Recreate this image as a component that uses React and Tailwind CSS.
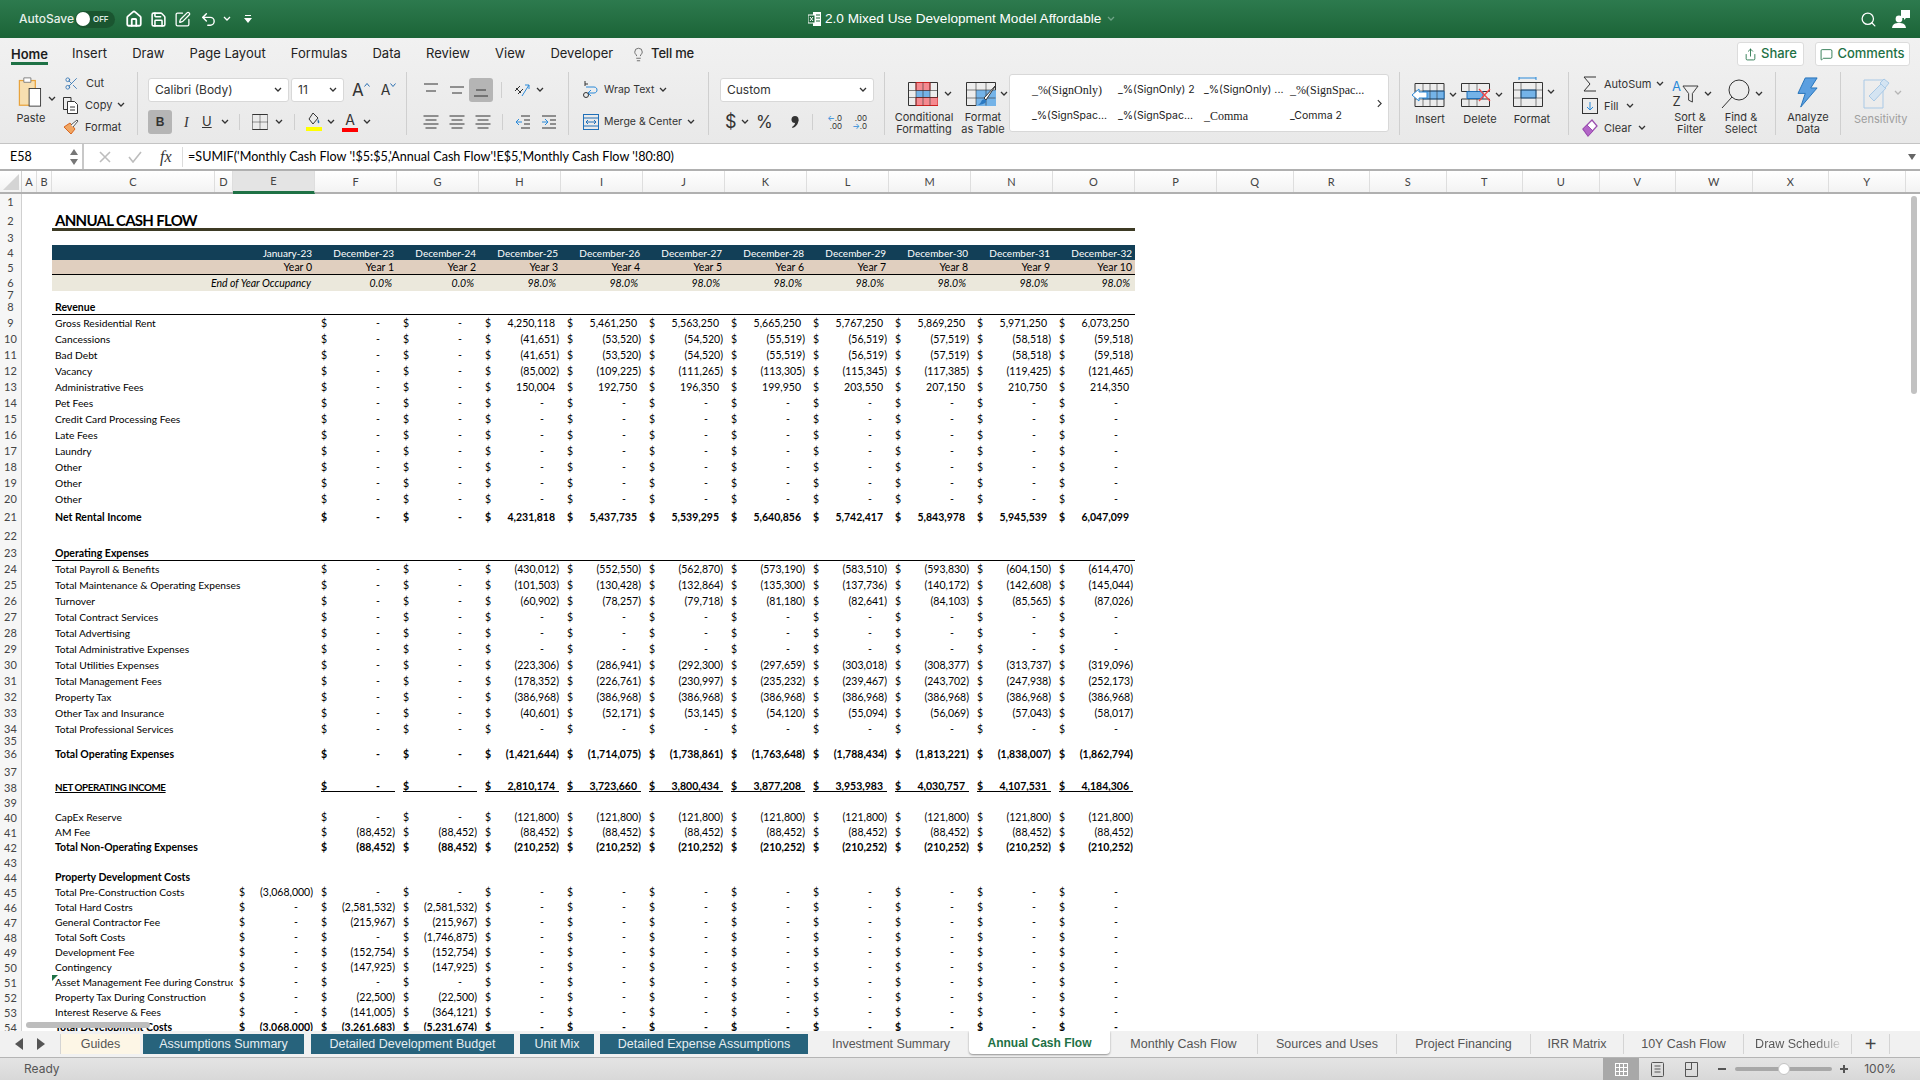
import { Home, Save, SquarePen, Undo2, Search, Share, MessageSquare, Lightbulb, Scissors } from 'lucide-react';

const DASHES = (n) => Array(n).fill('-');
const dollar8 = (v) => Array(8).fill(v);

const rows = [
  { n: 1, h: 'h-[16px]' },
  { n: 2, h: 'h-[21px]', type: 'title', label: 'ANNUAL CASH FLOW' },
  { n: 3, h: 'h-[14px]' },
  { n: 4, h: 'h-[15px]', type: 'dates' },
  { n: 5, h: 'h-[15px]', type: 'years' },
  { n: 6, h: 'h-[16px]', type: 'occupancy' },
  { n: 7, h: 'h-[8px]' },
  { n: 8, h: 'h-[16px]', type: 'section', label: 'Revenue' },
  { n: 9, label: 'Gross Residential Rent', vals: ['-', '-', '4,250,118', '5,461,250', '5,563,250', '5,665,250', '5,767,250', '5,869,250', '5,971,250', '6,073,250'] },
  { n: 10, label: 'Cancessions', vals: ['-', '-', '(41,651)', '(53,520)', '(54,520)', '(55,519)', '(56,519)', '(57,519)', '(58,518)', '(59,518)'] },
  { n: 11, label: 'Bad Debt', vals: ['-', '-', '(41,651)', '(53,520)', '(54,520)', '(55,519)', '(56,519)', '(57,519)', '(58,518)', '(59,518)'] },
  { n: 12, label: 'Vacancy', vals: ['-', '-', '(85,002)', '(109,225)', '(111,265)', '(113,305)', '(115,345)', '(117,385)', '(119,425)', '(121,465)'] },
  { n: 13, label: 'Administrative Fees', vals: ['-', '-', '150,004', '192,750', '196,350', '199,950', '203,550', '207,150', '210,750', '214,350'] },
  { n: 14, label: 'Pet Fees', vals: DASHES(10) },
  { n: 15, label: 'Credit Card Processing Fees', vals: DASHES(10) },
  { n: 16, label: 'Late Fees', vals: DASHES(10) },
  { n: 17, label: 'Laundry', vals: DASHES(10) },
  { n: 18, label: 'Other', vals: DASHES(10) },
  { n: 19, label: 'Other', vals: DASHES(10) },
  { n: 20, label: 'Other', vals: DASHES(10) },
  { n: 21, h: 'h-[20px]', bold: true, label: 'Net Rental Income', vals: ['-', '-', '4,231,818', '5,437,735', '5,539,295', '5,640,856', '5,742,417', '5,843,978', '5,945,539', '6,047,099'] },
  { n: 22, h: 'h-[18px]' },
  { n: 23, h: 'h-[16px]', type: 'section', label: 'Operating Expenses' },
  { n: 24, label: 'Total Payroll & Benefits', vals: ['-', '-', '(430,012)', '(552,550)', '(562,870)', '(573,190)', '(583,510)', '(593,830)', '(604,150)', '(614,470)'] },
  { n: 25, label: 'Total Maintenance & Operating Expenses', vals: ['-', '-', '(101,503)', '(130,428)', '(132,864)', '(135,300)', '(137,736)', '(140,172)', '(142,608)', '(145,044)'] },
  { n: 26, label: 'Turnover', vals: ['-', '-', '(60,902)', '(78,257)', '(79,718)', '(81,180)', '(82,641)', '(84,103)', '(85,565)', '(87,026)'] },
  { n: 27, label: 'Total Contract Services', vals: DASHES(10) },
  { n: 28, label: 'Total Advertising', vals: DASHES(10) },
  { n: 29, label: 'Total Administrative Expenses', vals: DASHES(10) },
  { n: 30, label: 'Total Utilities Expenses', vals: ['-', '-', '(223,306)', '(286,941)', '(292,300)', '(297,659)', '(303,018)', '(308,377)', '(313,737)', '(319,096)'] },
  { n: 31, label: 'Total Management Fees', vals: ['-', '-', '(178,352)', '(226,761)', '(230,997)', '(235,232)', '(239,467)', '(243,702)', '(247,938)', '(252,173)'] },
  { n: 32, label: 'Property Tax', vals: ['-', '-', ...dollar8('(386,968)')] },
  { n: 33, label: 'Other Tax and Insurance', vals: ['-', '-', '(40,601)', '(52,171)', '(53,145)', '(54,120)', '(55,094)', '(56,069)', '(57,043)', '(58,017)'] },
  { n: 34, label: 'Total Professional Services', vals: DASHES(10) },
  { n: 35, h: 'h-[8px]' },
  { n: 36, h: 'h-[18px]', bold: true, label: 'Total Operating Expenses', vals: ['-', '-', '(1,421,644)', '(1,714,075)', '(1,738,861)', '(1,763,648)', '(1,788,434)', '(1,813,221)', '(1,838,007)', '(1,862,794)'] },
  { n: 37, h: 'h-[17px]' },
  { n: 38, h: 'h-[15px]', bold: true, under: true, label: 'NET OPERATING INCOME', vals: ['-', '-', '2,810,174', '3,723,660', '3,800,434', '3,877,208', '3,953,983', '4,030,757', '4,107,531', '4,184,306'] },
  { n: 39, h: 'h-[15px]' },
  { n: 40, h: 'h-[15px]', label: 'CapEx Reserve', vals: ['-', '-', ...dollar8('(121,800)')] },
  { n: 41, h: 'h-[15px]', label: 'AM Fee', vals: Array(10).fill('(88,452)') },
  { n: 42, h: 'h-[15px]', bold: true, label: 'Total Non-Operating Expenses', vals: ['(88,452)', '(88,452)', ...dollar8('(210,252)')] },
  { n: 43, h: 'h-[15px]' },
  { n: 44, h: 'h-[15px]', bold: true, label: 'Property Development  Costs' },
  { n: 45, h: 'h-[15px]', label: 'Total Pre-Construction Costs', first: '(3,068,000)', vals: DASHES(10) },
  { n: 46, h: 'h-[15px]', label: 'Total Hard Costrs', first: '-', vals: ['(2,581,532)', '(2,581,532)', ...DASHES(8)] },
  { n: 47, h: 'h-[15px]', label: 'General Contractor Fee', first: '-', vals: ['(215,967)', '(215,967)', ...DASHES(8)] },
  { n: 48, h: 'h-[15px]', label: 'Total Soft Costs', first: '-', vals: ['-', '(1,746,875)', ...DASHES(8)] },
  { n: 49, h: 'h-[15px]', label: 'Development Fee', first: '-', vals: ['(152,754)', '(152,754)', ...DASHES(8)] },
  { n: 50, h: 'h-[15px]', label: 'Contingency', first: '-', vals: ['(147,925)', '(147,925)', ...DASHES(8)] },
  { n: 51, h: 'h-[15px]', label: 'Asset Management Fee during Construction', first: '-', vals: DASHES(10), flag: true },
  { n: 52, h: 'h-[15px]', label: 'Property Tax During Construction', first: '-', vals: ['(22,500)', '(22,500)', ...DASHES(8)] },
  { n: 53, h: 'h-[15px]', label: 'Interest Reserve & Fees', first: '-', vals: ['(141,005)', '(364,121)', ...DASHES(8)] },
  { n: 54, h: 'h-[15px]', bold: true, label: 'Total Development Costs', first: '(3,068,000)', vals: ['(3,261,683)', '(5,231,674)', ...DASHES(8)] },
];

const dates = ['January-23', 'December-23', 'December-24', 'December-25', 'December-26', 'December-27', 'December-28', 'December-29', 'December-30', 'December-31', 'December-32'];
const years = ['Year 0', 'Year 1', 'Year 2', 'Year 3', 'Year 4', 'Year 5', 'Year 6', 'Year 7', 'Year 8', 'Year 9', 'Year 10'];
const occ = ['0.0%', '0.0%', '98.0%', '98.0%', '98.0%', '98.0%', '98.0%', '98.0%', '98.0%', '98.0%'];

const columns = [
  ['A', 'w-[15px]'], ['B', 'w-[15px]'], ['C', 'w-[163px]'], ['D', 'w-[18px]'], ['E', 'w-[82px]'], ['F', 'w-[82px]'], ['G', 'w-[82px]'], ['H', 'w-[82px]'],
  ['I', 'w-[82px]'], ['J', 'w-[82px]'], ['K', 'w-[82px]'], ['L', 'w-[82px]'], ['M', 'w-[82px]'], ['N', 'w-[82px]'], ['O', 'w-[82px]'], ['P', 'w-[82px]'],
  ['Q', 'w-[76.5px]'], ['R', 'w-[76.5px]'], ['S', 'w-[76.5px]'], ['T', 'w-[76.5px]'], ['U', 'w-[76.5px]'], ['V', 'w-[76.5px]'], ['W', 'w-[76.5px]'], ['X', 'w-[76.5px]'], ['Y', 'w-[76.5px]'],
];

const menu = ['Insert', 'Draw', 'Page Layout', 'Formulas', 'Data', 'Review', 'View', 'Developer'];

const tabs = [
  { label: 'Guides', w: 'w-[79px]', cls: 'bg-[#fdf6e6] text-[#555] h-[20px]' },
  { label: 'Assumptions Summary', w: 'w-[161px] ml-[3px]', cls: 'bg-[#27637c] text-[#e6eef2] h-[20px]' },
  { label: 'Detailed Development Budget', w: 'w-[203px] ml-[7px]', cls: 'bg-[#27637c] text-[#e6eef2] h-[20px]' },
  { label: 'Unit Mix', w: 'w-[74px] ml-[6px]', cls: 'bg-[#27637c] text-[#e6eef2] h-[20px]' },
  { label: 'Detailed Expense Assumptions', w: 'w-[208px] ml-[6px]', cls: 'bg-[#27637c] text-[#e6eef2] h-[20px]' },
  { label: 'Investment Summary', w: 'w-[161px]', cls: 'text-[#555] h-[20px] pl-[5px]' },
  { label: 'Annual Cash Flow', w: 'w-[141px]', cls: 'bg-white text-[#1e7145] font-bold text-[12px] h-[23px] -mt-[3px] rounded-b shadow-[0_1px_2px_rgba(0,0,0,0.4)]' },
  { label: 'Monthly Cash Flow', w: 'w-[148px]', cls: 'text-[#555] h-[20px] border-r border-[#d4d4d4]' },
  { label: 'Sources and Uses', w: 'w-[139px]', cls: 'text-[#555] h-[20px] border-r border-[#d4d4d4]' },
  { label: 'Project Financing', w: 'w-[134px]', cls: 'text-[#555] h-[20px] border-r border-[#d4d4d4]' },
  { label: 'IRR Matrix', w: 'w-[93px]', cls: 'text-[#555] h-[20px] border-r border-[#d4d4d4]' },
  { label: '10Y Cash Flow', w: 'w-[120px]', cls: 'text-[#555] h-[20px] border-r border-[#d4d4d4]' },
  { label: 'Draw Schedule', w: 'w-[108px]', cls: 'text-[#555] h-[20px] border-r border-[#d4d4d4]' },
];

function Chev({ className = '', color = '#333' }) {
  return (
    <svg viewBox="0 0 8 6" className={`w-[8px] h-[6px] shrink-0 ${className}`} fill="none" stroke={color} strokeWidth="1.3">
      <path d="M1 1l3 3 3-3" />
    </svg>
  );
}

function Lines({ rows: ys, widths = [15, 15, 15] }) {
  return (
    <svg viewBox="0 0 16 16" className="w-[16px] h-[16px]" stroke="#333" strokeWidth="1" fill="none">
      {ys.map((y, i) => (
        <path key={y} d={`M${(16 - widths[i]) / 2} ${y}h${widths[i]}`} />
      ))}
    </svg>
  );
}

function CellGrid({ children, w = 'w-[30px]', h = 'h-[24px]', view = '0 0 30 24' }) {
  return (
    <svg viewBox={view} className={`${w} ${h}`} fill="none">
      {children}
    </svg>
  );
}

function RibbonLabel({ children, className = 'text-[#333]' }) {
  return <div className={`text-[11px] leading-[12px] text-center ${className}`}>{children}</div>;
}

function TitleBar() {
  return (
    <div className="h-[38px] shrink-0 flex items-center bg-gradient-to-b from-[#2d7a4e] to-[#1b6437] text-white font-['Inter',sans-serif]">
      <div className="w-[440px] flex items-center pl-[19px]">
        <span className="text-[12px] font-medium text-[#e7f0ea] w-[56px]">AutoSave</span>
        <div className="w-[40px] h-[17px] rounded-full bg-[#1a5530] flex items-center pl-[1px] gap-[3px]">
          <div className="w-[14px] h-[14px] rounded-full bg-white" />
          <span className="text-[8px] font-semibold text-[#dfe9e2]">OFF</span>
        </div>
        <Home className="ml-[10px] w-[18px] h-[18px]" strokeWidth={2.4} />
        <Save className="ml-[7px] w-[17px] h-[17px]" strokeWidth={2.2} />
        <SquarePen className="ml-[7px] w-[17px] h-[17px]" strokeWidth={1.8} />
        <Undo2 className="ml-[9px] w-[17px] h-[17px]" strokeWidth={2} />
        <Chev className="ml-[6px]" color="#fff" />
        <svg viewBox="0 0 8 8" className="ml-[13px] w-[8px] h-[8px]" fill="white">
          <path d="M1 0h6v1H1zM0 3h8L4 8z" />
        </svg>
      </div>
      <div className="w-[368px]" />
      <svg viewBox="0 0 13 14" className="w-[13px] h-[14px]">
        <path d="M5 0h8v14H5z" fill="white" />
        <path d="M0 3h7v8H0z" fill="#1b6437" stroke="white" />
        <path d="M2 5l3 4M5 5L2 9" stroke="white" />
        <path d="M8 3h4M8 6h4M8 9h4" stroke="#1b6437" />
      </svg>
      <span className="ml-[4px] text-[13.6px] whitespace-nowrap w-[280px] font-['Liberation_Sans',sans-serif]">2.0 Mixed Use Development Model Affordable</span>
      <Chev className="ml-[2px]" color="#6fa387" />
      <div className="flex-1" />
      <Search className="w-[17px] h-[17px] mr-[15px]" strokeWidth={1.8} />
      <svg viewBox="0 0 18 18" className="w-[18px] h-[18px] mr-[10px]" fill="white">
        <path d="M9 0h9v8h-4l-2 2V8H9z" />
        <circle cx="7" cy="9" r="3.4" />
        <path d="M0 18c.5-4 3-5 7-5s6.500 1 7 5z" />
      </svg>
    </div>
  );
}

function MenuBar() {
  return (
    <div className="h-[32px] flex items-start pl-[11px] text-[13px] text-[#222]">
      <span className="font-semibold text-[#1d1d1d] mt-[7px] h-[20px] border-b-[3px] border-[#1e7145] leading-[19px] mr-[24px]">Home</span>
      <div className="flex items-center gap-[25.2px] h-[32px]">
        {menu.map((m) => (
          <span key={m}>{m}</span>
        ))}
      </div>
      <div className="flex items-center h-[32px] ml-[18px]">
        <Lightbulb className="w-[15px] h-[15px] text-[#555]" strokeWidth={1.3} />
        <span className="ml-[5px] font-medium tracking-[-0.2px]">Tell me</span>
      </div>
      <div className="ml-auto flex gap-[11px] mr-[10px] mt-[4px]">
        <button className="h-[24px] w-[67px] rounded-[3px] bg-white border border-[#dcdcdc] flex items-center justify-center gap-[4px] text-[#1e7145] font-medium text-[13px]">
          <Share className="w-[13px] h-[13px]" strokeWidth={1.6} />
          Share
        </button>
        <button className="h-[24px] w-[95px] rounded-[3px] bg-white border border-[#dcdcdc] flex items-center justify-center gap-[4px] text-[#1e7145] font-medium text-[13px]">
          <MessageSquare className="w-[13px] h-[13px]" strokeWidth={1.6} />
          Comments
        </button>
      </div>
    </div>
  );
}

function ClipboardGroup() {
  return (
    <div className="w-[138px] h-[63px] border-r border-[#cfcfcf] flex shrink-0">
      <div className="ml-[17px] w-[30px] flex flex-col">
        <svg viewBox="0 0 26 34" className="w-[26px] h-[30px] mt-[5px]" fill="none">
          <rect x="1" y="4" width="18" height="28" fill="#f7dfb0" stroke="#e8a33d" strokeWidth="1.4" />
          <path d="M6 1h8v5H6z" fill="#fff" stroke="#777" />
          <rect x="12" y="13" width="13" height="20" fill="#fff" stroke="#333" />
        </svg>
        <RibbonLabel className="text-[#333] mt-[5px] -ml-[2px]">Paste</RibbonLabel>
      </div>
      <Chev className="ml-[1px] mt-[24px]" />
      <div className="ml-[7px] flex flex-col text-[11px] text-[#333]">
        <div className="h-[22px] shrink-0 flex items-center">
          <Scissors className="w-[15px] h-[15px] text-[#2b6fb0] ml-[1px]" strokeWidth={1.3} />
          <span className="ml-[7px]">Cut</span>
        </div>
        <div className="h-[22px] shrink-0 flex items-center">
          <svg viewBox="0 0 16 17" className="w-[16px] h-[17px]" fill="none" stroke="#333">
            <path d="M2 .5h6v4M2 .5H.5v12H4" />
            <path d="M4.500 4.500h7l3 3v9h-10z" fill="#fff" />
            <path d="M7 10h5M7 13h5" />
          </svg>
          <span className="ml-[6px]">Copy</span>
          <Chev className="ml-[5px]" />
        </div>
        <div className="h-[22px] shrink-0 flex items-center">
          <svg viewBox="0 0 16 16" className="w-[16px] h-[16px]" fill="none">
            <path d="M1 8l6-4 5 6-4 5z" fill="#f0a562" stroke="#d9661f" />
            <path d="M8 6l6-5 1 1-5 6" fill="#fff" stroke="#555" />
          </svg>
          <span className="ml-[6px]">Format</span>
        </div>
      </div>
    </div>
  );
}

function Select({ w, text }) {
  return (
    <div className={`${w} h-[24px] rounded-[3px] bg-white border border-[#d8d8d8] flex items-center justify-between px-[6px] text-[12px] text-[#333]`}>
      <span className="whitespace-nowrap">{text}</span>
      <Chev />
    </div>
  );
}

function FontGroup() {
  return (
    <div className="w-[269px] h-[63px] border-r border-[#cfcfcf] shrink-0 pl-[10px] pt-[6px] text-[#333]">
      <div className="flex items-center h-[24px]">
        <Select w="w-[141px]" text="Calibri (Body)" />
        <div className="ml-[2px]">
          <Select w="w-[53px]" text="11" />
        </div>
        <span className="ml-[8px] text-[17px] leading-none">A</span>
        <svg viewBox="0 0 6 4" className="w-[6px] h-[4px] mb-[10px]" fill="none" stroke="#2b6fb0"><path d="M.5 3.500l2.500-3 2.500 3" /></svg>
        <span className="ml-[11px] text-[14px] leading-none">A</span>
        <svg viewBox="0 0 6 4" className="w-[6px] h-[4px] mb-[10px]" fill="none" stroke="#2b6fb0"><path d="M.5.500l2.500 3 2.500-3" /></svg>
      </div>
      <div className="flex items-center h-[24px] mt-[8px]">
        <div className="w-[24px] h-[24px] rounded-[3px] bg-[#b5b5b5] flex items-center justify-center text-[12px] font-bold font-['Liberation_Sans',sans-serif]">B</div>
        <span className="ml-[12px] w-[8px] text-[14px] italic font-['Liberation_Serif',serif]">I</span>
        <span className="ml-[10px] w-[14px] text-[13px] underline">U</span>
        <Chev className="ml-[5px]" />
        <div className="ml-[10px] w-px h-[16px] bg-[#cfcfcf]" />
        <svg viewBox="0 0 16 16" className="ml-[12px] w-[16px] h-[16px]" fill="none" stroke="#333">
          <path d="M.5.500h15M.500 15.500h15" />
          <path d="M.5.500v15M8 .500v15M15.500.500v15M.500 8h15" strokeDasharray="1 1" />
        </svg>
        <Chev className="ml-[7px]" />
        <div className="ml-[11px] w-px h-[16px] bg-[#cfcfcf]" />
        <div className="ml-[11px] w-[16px] h-[20px] flex flex-col items-center">
          <svg viewBox="0 0 14 14" className="w-[14px] h-[14px]" fill="none" stroke="#333">
            <path d="M6 1l5 5-5 6-4-5z" />
            <path d="M11 7c1 2 2 3 1 4s-2-1-1-4z" fill="#2b6fb0" stroke="none" />
          </svg>
          <div className="w-[16px] h-[4px] bg-[#ffff00] mt-[1px]" />
        </div>
        <Chev className="ml-[5px]" />
        <div className="ml-[7px] w-[16px] h-[20px] flex flex-col items-center">
          <span className="text-[14px] leading-[15px]">A</span>
          <div className="w-[16px] h-[4px] bg-[#ff0000] mt-[1px]" />
        </div>
        <Chev className="ml-[5px]" />
      </div>
    </div>
  );
}

function AlignGroup() {
  return (
    <div className="w-[162px] h-[63px] border-r border-[#cfcfcf] shrink-0 pl-[16px] pt-[6px]">
      <div className="flex items-center h-[24px]">
        <Lines rows={[2, 9]} widths={[14, 10]} />
        <div className="ml-[10px]"><Lines rows={[5, 11]} widths={[14, 10]} /></div>
        <div className="ml-[4px] w-[24px] h-[24px] rounded-[3px] bg-[#b5b5b5] flex items-center justify-center"><Lines rows={[8, 14]} widths={[10, 14]} /></div>
        <div className="ml-[8px] w-px h-[16px] bg-[#cfcfcf]" />
        <svg viewBox="0 0 16 16" className="ml-[12px] w-[16px] h-[16px]" fill="none" stroke="#333">
          <path d="M1 9l5-5M4 12l5-5M2 6l5 5" />
          <path d="M8 14L15 3M15 3h-4M15 3v4" stroke="#2b8ad9" />
        </svg>
        <Chev className="ml-[6px]" />
      </div>
      <div className="flex items-center h-[24px] mt-[8px]">
        <Lines rows={[2, 6, 10, 14]} widths={[15, 11, 15, 11]} />
        <div className="ml-[10px]"><Lines rows={[2, 6, 10, 14]} widths={[15, 11, 15, 11]} /></div>
        <div className="ml-[10px]"><Lines rows={[2, 6, 10, 14]} widths={[15, 11, 15, 11]} /></div>
        <div className="ml-[11px] w-px h-[16px] bg-[#cfcfcf]" />
        <svg viewBox="0 0 16 16" className="ml-[12px] w-[16px] h-[16px]" fill="none" stroke="#333">
          <path d="M6 2h9M6 14h9M9 6h6M9 10h6" />
          <path d="M7 8H1M4 5L1 8l3 3" stroke="#2b8ad9" />
        </svg>
        <svg viewBox="0 0 16 16" className="ml-[10px] w-[16px] h-[16px]" fill="none" stroke="#333">
          <path d="M1 2h14M1 14h14M9 6h6M9 10h6" />
          <path d="M1 8h6M4 5l3 3-3 3" stroke="#2b8ad9" />
        </svg>
      </div>
    </div>
  );
}

function WrapGroup() {
  return (
    <div className="w-[140px] h-[63px] border-r border-[#cfcfcf] shrink-0 pl-[14px] pt-[6px] text-[10.5px] text-[#333]">
      <div className="flex items-center h-[24px]">
        <svg viewBox="0 0 16 18" className="w-[16px] h-[18px]" fill="none">
          <path d="M3 6h8c4 0 4 6 0 6H6M8 9l-3 3 3 3" stroke="#2b8ad9" />
          <circle cx="3" cy="14" r="2.500" stroke="#333" />
          <path d="M2 0v5M2 3h3" stroke="#333" />
        </svg>
        <span className="ml-[5px]">Wrap Text</span>
        <Chev className="ml-[5px]" />
      </div>
      <div className="flex items-center h-[24px] mt-[8px]">
        <svg viewBox="0 0 16 16" className="w-[16px] h-[16px]" fill="none" stroke="#1f6fb8">
          <rect x=".5" y=".5" width="15" height="15" />
          <path d="M.5 4h15M.5 12h15" />
          <path d="M3 8h10M5 6L3 8l2 2M11 6l2 2-2 2" />
        </svg>
        <span className="ml-[5px] whitespace-nowrap">Merge &amp; Center</span>
        <Chev className="ml-[5px]" />
      </div>
    </div>
  );
}

function NumberGroup() {
  return (
    <div className="w-[176px] h-[63px] border-r border-[#cfcfcf] shrink-0 pl-[11px] pt-[6px] text-[#333]">
      <Select w="w-[154px]" text="Custom" />
      <div className="flex items-center h-[24px] mt-[8px]">
        <span className="ml-[5px] w-[12px] text-[18px] leading-none">$</span>
        <Chev className="ml-[4px]" />
        <span className="ml-[7px] w-[18px] text-[17px] leading-none">%</span>
        <svg viewBox="0 0 8 12" className="ml-[17px] w-[8px] h-[12px]" fill="#333">
          <circle cx="4" cy="3.500" r="3.500" />
          <path d="M7.500 3.500C7.500 8 5 11 1.500 12L1 11c2-1 3-3 3-4z" />
        </svg>
        <div className="ml-[13px] w-px h-[16px] bg-[#cfcfcf]" />
        <div className="ml-[12px] w-[17px] flex flex-col items-end text-[8px] leading-[8px]">
          <span><span className="text-[#2b8ad9]">←</span>.0</span>
          <span>.00</span>
        </div>
        <div className="ml-[8px] w-[17px] flex flex-col items-end text-[8px] leading-[8px]">
          <span>.00</span>
          <span><span className="text-[#2b8ad9]">→</span>.0</span>
        </div>
      </div>
    </div>
  );
}

function StyleItem({ text, serif }) {
  return (
    <span className={`w-[86px] whitespace-nowrap text-[#222] ${serif ? "font-['Liberation_Serif',serif] text-[12px]" : 'text-[10.5px]'}`}>{text}</span>
  );
}

function StylesGroup() {
  return (
    <div className="w-[515px] h-[63px] border-r border-[#cfcfcf] shrink-0 flex">
      <div className="w-[78px] flex flex-col items-center shrink-0">
        <div className="flex items-center h-[38px] pt-[8px] gap-[6px] ml-[12px]">
          <CellGrid>
            <path d="M.5 .5h29v23H.5z" stroke="#333" />
            <path d="M8 .5h14v8H8z" fill="#f58a90" stroke="#c22" />
            <path d="M8 8.500h14v7H8z" fill="#74b3e8" />
            <path d="M8 15.500h22v8H8z" fill="#f58a90" stroke="#c22" />
            <path d="M8 .5v23M15 .5v23M22 .5v23M.5 8.500h29M.5 15.500h29" stroke="#333" strokeWidth=".6" />
          </CellGrid>
          <Chev />
        </div>
        <RibbonLabel className="text-[#333] mt-[4px]">Conditional<br />Formatting</RibbonLabel>
      </div>
      <div className="w-[44px] -ml-[2px] flex flex-col items-center shrink-0">
        <div className="flex items-center h-[38px] pt-[8px] gap-[4px] ml-[8px]">
          <CellGrid>
            <path d="M.5 .5h29v23H.5z" stroke="#333" />
            <path d="M10 8h20v16H10z" fill="#74b3e8" />
            <path d="M10 .5v23M20 .5v23M.5 8h29M.5 16h29" stroke="#333" strokeWidth=".6" />
            <path d="M30 3L18 16l2 2z" fill="#fff" stroke="#333" />
            <path d="M16 18c3-2 5 0 4 2s-6 3-8 3c2-1 3-3 4-5z" fill="#2b79c2" />
          </CellGrid>
          <Chev />
        </div>
        <RibbonLabel className="text-[#333] mt-[4px] whitespace-nowrap">Format<br />as Table</RibbonLabel>
      </div>
      <div className="ml-[4px] mt-[2px] w-[380px] h-[58px] rounded-[3px] bg-white border border-[#d8d8d8] flex items-center pl-[22px]">
        <div className="flex-1 flex flex-col gap-[11px]">
          <div className="flex items-center h-[15px]">
            <StyleItem text="_%(SignOnly)" serif />
            <StyleItem text="_%(SignOnly) 2" />
            <StyleItem text="_%(SignOnly) ..." />
            <StyleItem text="_%(SignSpac..." serif />
          </div>
          <div className="flex items-center h-[15px]">
            <StyleItem text="_%(SignSpac..." />
            <StyleItem text="_%(SignSpac..." />
            <StyleItem text="_Comma" serif />
            <StyleItem text="_Comma 2" />
          </div>
        </div>
        <svg viewBox="0 0 6 10" className="w-[5px] h-[9px] mr-[6px]" fill="none" stroke="#333" strokeWidth="1.3"><path d="M1 1l4 4-4 4" /></svg>
      </div>
    </div>
  );
}

function CellsGroup() {
  return (
    <div className="w-[169px] h-[63px] border-r border-[#cfcfcf] shrink-0 flex pl-[11px]">
      <div className="w-[50px] flex flex-col">
        <div className="flex items-center h-[38px] pt-[8px] gap-[4px]">
          <CellGrid w="w-[34px]" view="0 0 34 24">
            <path d="M4 .5h29v23H4z" stroke="#333" />
            <path d="M12 8h21v8H12z" fill="#74b3e8" stroke="#1f6fb8" />
            <path d="M12 .5v23M19 .5v23M26 .5v23M4 8h29M4 16h29" stroke="#333" strokeWidth=".6" />
            <path d="M1 12l7-6v3h8v6H8v3z" fill="#fff" stroke="#2b8ad9" />
          </CellGrid>
          <Chev />
        </div>
        <RibbonLabel className="text-[#333] mt-[3px] pr-[12px]">Insert</RibbonLabel>
      </div>
      <div className="w-[50px] flex flex-col">
        <div className="flex items-center h-[38px] pt-[8px] gap-[4px]">
          <CellGrid w="w-[30px]">
            <path d="M.5 .5h28v8H.5zM.5 16h28v7.500H.5z" stroke="#333" />
            <path d="M6 8.500h16v7H6z" fill="#74b3e8" stroke="#1f6fb8" />
            <path d="M8 .5v8M16 .5v8M8 16v8M16 16v8" stroke="#333" strokeWidth=".6" />
            <path d="M18 6l11 12M29 6L18 18" stroke="#f04a4a" strokeWidth="1.3" />
          </CellGrid>
          <Chev />
        </div>
        <RibbonLabel className="text-[#333] mt-[3px] pr-[12px]">Delete</RibbonLabel>
      </div>
      <div className="w-[50px] flex flex-col">
        <div className="flex items-center h-[38px] pt-[2px] gap-[4px] ml-[2px]">
          <CellGrid w="w-[30px]" h="h-[30px]" view="0 0 30 30">
            <path d="M6 1h17M6 0v3M23 0v3" stroke="#2b8ad9" />
            <path d="M.5 5.500h29v24H.5z" stroke="#333" />
            <path d="M8 13h15v8H8z" fill="#74b3e8" stroke="#1f6fb8" />
            <path d="M8 5.500v24M23 5.500v24M.5 13h29M.5 21h29" stroke="#333" strokeWidth=".6" />
          </CellGrid>
          <Chev />
        </div>
        <RibbonLabel className="text-[#333] mt-[3px] pr-[8px]">Format</RibbonLabel>
      </div>
    </div>
  );
}

function EditGroup() {
  return (
    <div className="w-[207px] h-[63px] border-r border-[#cfcfcf] shrink-0 flex pl-[13px] text-[11px] text-[#333]">
      <div className="w-[90px] flex flex-col pt-[1px]">
        <div className="h-[22px] shrink-0 flex items-center">
          <svg viewBox="0 0 14 16" className="w-[14px] h-[16px] ml-[1px]" fill="none" stroke="#333"><path d="M13 1H1l6 7-6 7h12" /></svg>
          <span className="ml-[7px]">AutoSum</span>
          <Chev className="ml-[5px]" />
        </div>
        <div className="h-[22px] shrink-0 flex items-center">
          <svg viewBox="0 0 16 16" className="w-[16px] h-[16px]" fill="none" stroke="#333">
            <rect x=".5" y=".5" width="15" height="15" />
            <path d="M8 4v8M5 9l3 3 3-3" stroke="#2b8ad9" />
          </svg>
          <span className="ml-[6px]">Fill</span>
          <Chev className="ml-[7px]" />
        </div>
        <div className="h-[22px] shrink-0 flex items-center">
          <svg viewBox="0 0 16 18" className="w-[16px] h-[18px]" fill="none">
            <path d="M1 10l9-9 5 6-9 10z" fill="#fff" stroke="#9b4fb0" strokeWidth="1.3" />
            <path d="M1 10l4-4 6 6-5 5z" fill="#b265c7" stroke="#9b4fb0" />
          </svg>
          <span className="ml-[6px]">Clear</span>
          <Chev className="ml-[6px]" />
        </div>
      </div>
      <div className="w-[50px] flex flex-col ml-[-1px]">
        <div className="flex items-center h-[38px] pt-[6px] gap-[4px]">
          <div className="w-[29px] h-[32px] flex items-center">
            <div className="flex flex-col text-[13px] leading-[15px] text-center w-[11px]">
              <span className="text-[#2b8ad9]">A</span>
              <span>Z</span>
            </div>
            <svg viewBox="0 0 18 20" className="w-[17px] h-[19px]" fill="none" stroke="#333"><path d="M1 1h16l-6 8v9l-4-2V9z" /></svg>
          </div>
          <Chev />
        </div>
        <RibbonLabel className="text-[#333] pr-[12px] mt-[1px]">Sort &amp;<br />Filter</RibbonLabel>
      </div>
      <div className="w-[50px] flex flex-col">
        <div className="flex items-center h-[38px] pt-[6px] gap-[4px]">
          <svg viewBox="0 0 30 32" className="w-[30px] h-[32px]" fill="none" stroke="#333">
            <circle cx="18" cy="12" r="10" />
            <path d="M11 19L1 30" />
          </svg>
          <Chev />
        </div>
        <RibbonLabel className="text-[#333] pr-[10px] mt-[1px] whitespace-nowrap">Find &amp;<br />Select</RibbonLabel>
      </div>
    </div>
  );
}

function AnalyzeGroup() {
  return (
    <div className="w-[65px] h-[63px] border-r border-[#cfcfcf] shrink-0 flex flex-col items-center">
      <svg viewBox="0 0 24 34" className="w-[24px] h-[34px] mt-[5px]" fill="#5b9fe0" stroke="#1f6fb8">
        <path d="M9 1h13l-7 11h7L4 33l5-15H1z" />
      </svg>
      <RibbonLabel className="text-[#333] mt-[3px]">Analyze<br />Data</RibbonLabel>
    </div>
  );
}

function SensitivityGroup() {
  return (
    <div className="flex-1 h-[63px] flex flex-col pl-[13px]">
      <div className="flex items-center h-[38px] pt-[4px] gap-[3px] pl-[9px]">
        <svg viewBox="0 0 28 32" className="w-[28px] h-[32px]" fill="none" stroke="#a9c9e6">
          <path d="M1 3h19v28H1z" />
          <path d="M6 19l12-12 5 4-12 13z" fill="#d4e4f2" />
          <path d="M17 6l4-4 5 4-4 5z" fill="#d4e4f2" />
        </svg>
        <Chev color="#b5b5b5" />
      </div>
      <RibbonLabel className="text-[#9e9e9e] text-left mt-[3px]">Sensitivity</RibbonLabel>
    </div>
  );
}

function FormulaBar() {
  return (
    <div className="h-[26px] shrink-0 bg-white border-t border-[#c4c4c4] flex items-center font-['Lato',sans-serif] text-black">
      <div className="w-[84px] h-full flex items-center justify-between pl-[10px] pr-[4px] border-r-[2px] border-[#c8c8c8]">
        <span className="text-[12.5px] pt-[1px]">E58</span>
        <svg viewBox="0 0 8 16" className="w-[8px] h-[16px]" fill="#777"><path d="M4 0l4 6H0zM4 16l4-6H0z" /></svg>
      </div>
      <svg viewBox="0 0 12 12" className="ml-[15px] w-[12px] h-[12px]" fill="none" stroke="#bdbdbd" strokeWidth="1.6"><path d="M1 1l10 10M11 1L1 11" /></svg>
      <svg viewBox="0 0 14 12" className="ml-[17px] w-[14px] h-[12px]" fill="none" stroke="#bdbdbd" strokeWidth="1.6"><path d="M1 6l4 5 8-10" /></svg>
      <span className="ml-[18px] w-[15px] text-[16px] italic font-['Liberation_Serif',serif] text-[#333]">fx</span>
      <div className="ml-[7px] w-px h-[20px] bg-[#dcdcdc]" />
      <span className="ml-[5px] pt-[1px] text-[12.6px] whitespace-nowrap">=SUMIF('Monthly Cash Flow '!$5:$5,'Annual Cash Flow'!E$5,'Monthly Cash Flow '!80:80)</span>
      <svg viewBox="0 0 8 6" className="ml-auto mr-[4px] w-[8px] h-[6px]" fill="#666"><path d="M0 0h8L4 6z" /></svg>
    </div>
  );
}

function ColumnHeader() {
  return (
    <div className="h-[25px] shrink-0 flex border-t-[2px] border-b-[2px] border-[#b0b0b0] bg-gradient-to-b from-white to-[#f3f3f3] text-[11px] text-[#444] font-['Lato',sans-serif]">
      <div className="w-[22px] flex items-center justify-end pr-[2px] border-r border-[#d0d0d0]">
        <div className="w-0 h-0 border-b-[16px] border-b-[#d4d4d4] border-l-[16px] border-l-transparent" />
      </div>
      {columns.map(([l, w]) => (
        <div
          key={l}
          className={`${w} flex items-center justify-center pt-[1px] border-r border-[#dedede] ${l === 'E' ? 'bg-[#e4e4e4] border-b-[3px] border-b-[#1e7145] -mb-[2px]' : ''}`}
        >
          {l}
        </div>
      ))}
    </div>
  );
}

function Money({ v, bold, under }) {
  if (v === undefined) return <div className="w-[82px] shrink-0" />;
  const pad = v === '-' ? 'pr-[15px]' : v[0] === '(' ? 'pr-0' : 'pr-[4px]';
  return (
    <div className="w-[82px] shrink-0 pl-[6px] pr-[2px]">
      <div className={`flex justify-between items-center ${bold ? 'font-bold' : ''} ${under ? 'h-[11px] mt-[1px] border-b border-black' : 'h-[14px]'}`}>
        <span>$</span>
        <span className={pad}>{v}</span>
      </div>
    </div>
  );
}

function RowBody({ r }) {
  if (r.type === 'title') {
    return (
      <div className="w-[1083px] h-full border-b-[3px] border-[#3d3a24] pl-[3px] pt-[1px] text-[15px] tracking-[-0.7px] font-bold leading-[18px] whitespace-nowrap">
        {r.label}
      </div>
    );
  }
  if (r.type === 'dates') {
    return (
      <div className="w-[1083px] h-full bg-[#123f57] flex items-center text-white text-[10px] pl-[181px]">
        {dates.map((d) => (
          <div key={d} className="w-[82px] text-right pr-[3px]">{d}</div>
        ))}
      </div>
    );
  }
  if (r.type === 'years') {
    return (
      <div className="w-[1083px] h-full bg-[#e0cfbf] border-b border-black flex items-center pl-[181px]">
        {years.map((d) => (
          <div key={d} className="w-[82px] text-right pr-[3px]">{d}</div>
        ))}
      </div>
    );
  }
  if (r.type === 'occupancy') {
    return (
      <div className="w-[1083px] h-full bg-[#ebe8dc] flex items-center italic">
        <div className="w-[263px] text-right pr-[4px] whitespace-nowrap">End of Year Occupancy</div>
        {occ.map((d, i) => (
          <div key={i} className="w-[82px] text-right pr-[5px]">{d}</div>
        ))}
      </div>
    );
  }
  if (r.type === 'section') {
    return <div className="w-[1083px] h-full border-b border-black flex items-center pl-[3px] text-[10.5px] font-bold whitespace-nowrap">{r.label}</div>;
  }
  if (!r.label) return null;
  const size = r.under ? 'text-[9.8px] tracking-[-0.4px]' : r.bold ? 'text-[10.5px]' : 'text-[10.25px]';
  return (
    <div className={`w-[1083px] h-full flex ${r.h === 'h-[15px]' ? 'items-start' : 'items-center'}`}>
      <div className={`relative w-[181px] shrink-0 pl-[3px] whitespace-nowrap ${size} ${r.first ? 'overflow-hidden' : ''} ${r.bold ? 'font-bold' : ''} ${r.under ? 'underline' : ''}`}>
        {r.flag && <div className="absolute left-0 top-0 w-0 h-0 border-t-[6px] border-t-[#1e7145] border-r-[6px] border-r-transparent" />}
        {r.label}
      </div>
      <Money v={r.first} bold={r.bold} />
      {r.vals && r.vals.map((v, i) => <Money key={i} v={v} bold={r.bold} under={r.under} />)}
    </div>
  );
}

function Sheet() {
  return (
    <div className="relative flex-1 overflow-hidden bg-white text-black text-[10.5px] leading-[14px] font-['Lato',sans-serif]">
      {rows.map((r) => (
        <div key={r.n} className={`flex ${r.h || 'h-[16px]'}`}>
          <div className="w-[22px] shrink-0 bg-[#f6f6f6] border-r border-[#d0d0d0] text-[#444] text-[11px] flex items-center justify-center overflow-hidden">
            {r.n}
          </div>
          <div className="w-[30px] shrink-0" />
          <RowBody r={r} />
        </div>
      ))}
      <div className="absolute right-[3px] top-[2px] w-[6px] h-[198px] rounded-full bg-[#c2c2c2]" />
      <div className="absolute left-[26px] bottom-[3px] w-[124px] h-[6px] rounded-full bg-[#bdbdbd]" />
    </div>
  );
}

function TabBar() {
  return (
    <div className="h-[27px] shrink-0 flex items-start pt-[3px] bg-[#f1f1f1] border-b border-[#b5b5b5] text-[12.5px] font-['Liberation_Sans',sans-serif]">
      <div className="w-[61px] h-[20px] flex items-center justify-center gap-[14px] border-r border-[#d4d4d4] shrink-0">
        <svg viewBox="0 0 8 12" className="w-[8px] h-[12px]" fill="#555"><path d="M8 0v12L0 6z" /></svg>
        <svg viewBox="0 0 8 12" className="w-[8px] h-[12px]" fill="#555"><path d="M0 0v12l8-6z" /></svg>
      </div>
      {tabs.map((t) => (
        <div key={t.label} className={`${t.w} ${t.cls} shrink-0 flex items-center justify-center whitespace-nowrap`}>
          {t.label === 'Draw Schedule' ? (
            <span className="bg-gradient-to-r from-[#555] from-70% to-[#d8d8d8] bg-clip-text text-transparent">{t.label}</span>
          ) : (
            t.label
          )}
        </div>
      ))}
      <div className="w-[38px] h-[20px] border-r border-[#d4d4d4] flex items-center justify-center text-[20px] text-[#444] font-light shrink-0">+</div>
    </div>
  );
}

function StatusBar() {
  return (
    <div className="h-[22px] shrink-0 flex items-center bg-gradient-to-b from-[#e4e4e4] to-[#d8d8d8] text-[12px] text-[#555] font-['Inter',sans-serif]">
      <span className="ml-[24px]">Ready</span>
      <div className="ml-auto flex items-center h-full">
        <div className="w-[36px] h-full bg-[#a8a8a8] flex items-center justify-center">
          <svg viewBox="0 0 13 13" className="w-[13px] h-[13px]" fill="none" stroke="#fff">
            <rect x=".5" y=".5" width="12" height="12" />
            <path d="M4.500 .5v12M8.500 .5v12M.5 4.500h12M.5 8.500h12" />
          </svg>
        </div>
        <svg viewBox="0 0 13 15" className="ml-[12px] w-[13px] h-[15px]" fill="none" stroke="#555">
          <rect x=".5" y=".5" width="12" height="14" rx="1" />
          <path d="M3.500 4h6M3.500 7h6M3.500 10h6" />
        </svg>
        <svg viewBox="0 0 13 15" className="ml-[21px] w-[13px] h-[15px]" fill="none" stroke="#555">
          <path d="M.5 .5h12v14H.5zM6.500 .5v7h-6" />
        </svg>
        <svg viewBox="0 0 8 2" className="ml-[20px] w-[8px] h-[2px]" fill="#555"><path d="M0 0h8v2H0z" /></svg>
        <div className="ml-[9px] w-[97px] h-[4px] rounded-full bg-[#a8a8a8] flex items-center pl-[43px]">
          <div className="w-[12px] h-[12px] rounded-full bg-white border border-[#c4c4c4]" />
        </div>
        <svg viewBox="0 0 8 8" className="ml-[8px] w-[8px] h-[8px]" fill="#555"><path d="M3 0h2v3h3v2H5v3H3V5H0V3h3z" /></svg>
        <span className="ml-[16px] mr-[24px] text-[12px]">100%</span>
      </div>
    </div>
  );
}

export default function App() {
  return (
    <div className="w-[1920px] h-[1080px] flex flex-col overflow-hidden bg-[#f1f1f1]">
      <TitleBar />
      <div className="h-[105px] shrink-0 bg-gradient-to-b from-[#f1f1f1] to-[#e9e9e9] font-['Inter',sans-serif]">
        <MenuBar />
        <div className="flex pt-[2px]">
          <ClipboardGroup />
          <FontGroup />
          <AlignGroup />
          <WrapGroup />
          <NumberGroup />
          <StylesGroup />
          <CellsGroup />
          <EditGroup />
          <AnalyzeGroup />
          <SensitivityGroup />
        </div>
      </div>
      <FormulaBar />
      <ColumnHeader />
      <Sheet />
      <TabBar />
      <StatusBar />
    </div>
  );
}
